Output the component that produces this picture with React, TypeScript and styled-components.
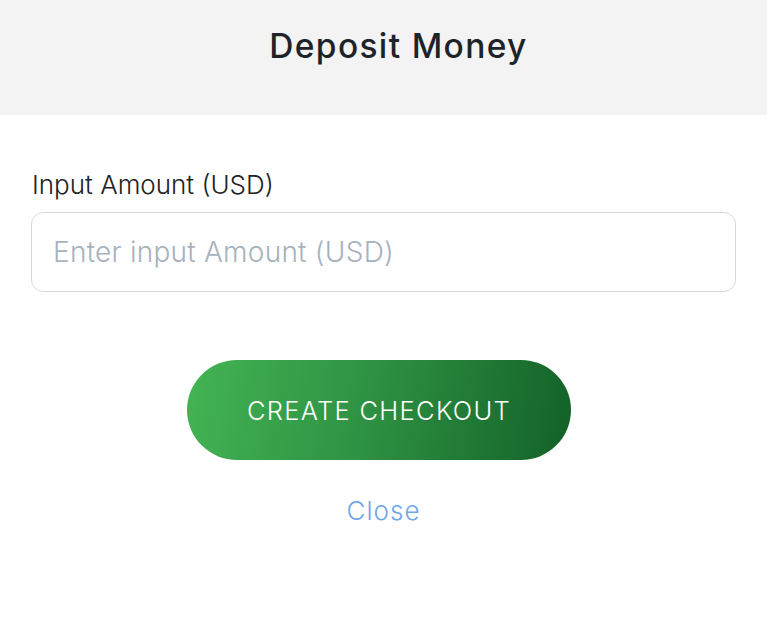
import React from "react";
import styled, { createGlobalStyle } from "styled-components";

const FONT = `Inter, "Noto Sans", sans-serif`;

const Global = createGlobalStyle`
  html, body { margin: 0; padding: 0; background: #ffffff; }
  body { font-family: ${FONT}; }
`;

const Page = styled.div`
  width: 767px;
  min-height: 630px;
  display: flex;
  flex-direction: column;
  background: #ffffff;
`;

const Header = styled.header`
  height: 115px;
  background: #f3f3f3;
  display: flex;
  align-items: center;
  justify-content: center;
  padding: 0 0 24px 30px;
  box-sizing: border-box;
`;

const Title = styled.h1`
  margin: 0;
  font-size: 33.5px;
  font-weight: 500;
  color: #1d2329;
  letter-spacing: 1.35px;
`;

const Body = styled.main`
  display: flex;
  flex-direction: column;
  padding: 54px 31px 0 31px;
`;

const Label = styled.label`
  font-size: 26px;
  font-weight: 300;
  color: #222;
  margin-left: 1px;
  line-height: 32px;
`;

const Input = styled.input`
  margin-top: 11px;
  height: 80px;
  box-sizing: border-box;
  border: 1px solid #d8d8d8;
  border-radius: 12px;
  padding: 0 21px;
  font-family: ${FONT};
  font-size: 28px;
  font-weight: 300;
  letter-spacing: 0.25px;
  color: #222;
  outline: none;
  &::placeholder { color: #a6b2bd; }
`;

const Actions = styled.div`
  display: flex;
  flex-direction: column;
  align-items: center;
  margin-top: 68px;
`;

const PrimaryButton = styled.button`
  width: 384px;
  height: 100px;
  margin-right: 9px;
  border: none;
  border-radius: 50px;
  background: linear-gradient(100deg, #43b453 0%, #2f9344 45%, #136128 100%);
  color: #ffffff;
  font-family: ${FONT};
  font-size: 25.5px;
  font-weight: 300;
  letter-spacing: 1.3px;
  cursor: pointer;
`;

const LinkButton = styled.button`
  margin-top: 35px;
  border: none;
  background: none;
  font-family: ${FONT};
  font-size: 26px;
  font-weight: 300;
  letter-spacing: 1px;
  color: #6fa7e8;
  cursor: pointer;
  padding: 0;
`;

export default function App() {
  return (
    <>
      <Global />
      <Page>
        <Header>
          <Title>Deposit Money</Title>
        </Header>
        <Body>
          <Label htmlFor="amount">Input Amount (USD)</Label>
          <Input id="amount" placeholder="Enter input Amount (USD)" />
          <Actions>
            <PrimaryButton>CREATE CHECKOUT</PrimaryButton>
            <LinkButton>Close</LinkButton>
          </Actions>
        </Body>
      </Page>
    </>
  );
}
